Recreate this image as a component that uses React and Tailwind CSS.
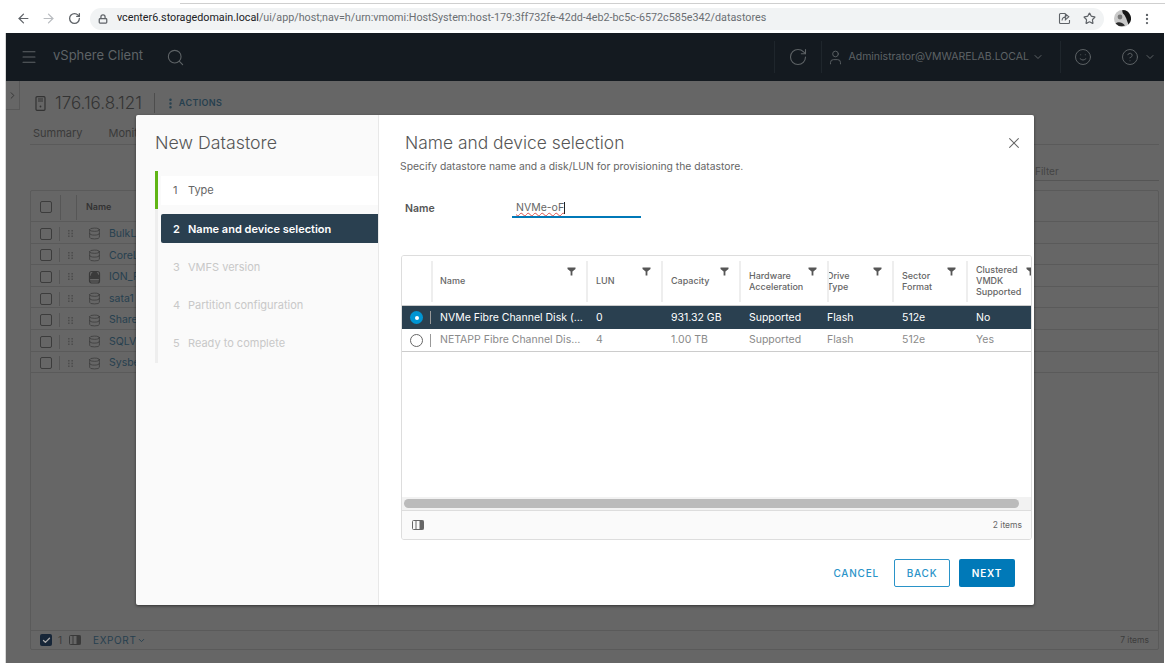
import React from 'react';
import {
  ArrowLeft,
  ArrowRight,
  RotateCw,
  Lock,
  Star,
  MoreVertical,
  Menu,
  Search,
  User,
  ChevronDown,
  ChevronRight,
  Smile,
  CircleHelp,
  Database,
  X,
  Check,
} from 'lucide-react';

const font = 'font-["Inter","Liberation_Sans",sans-serif]';

const CloudDatabase = ({ className }) => (
  <svg width="13" height="14" viewBox="0 0 13 14" fill="none" className={className}>
    <rect x="1.5" y="1.5" width="10" height="11.5" rx="2" stroke="currentColor" strokeWidth="1.2" />
    <path d="M1.5 8.5h10M1.5 11h10" stroke="currentColor" />
    <path d="M3 8c-1.6 0-1.8-2.2-.2-2.5C3 3.2 4.8 1.6 6.8 1.6c1.7 0 3 1.3 3.3 2.9 1.8.2 2.2 3.5.1 3.5z" fill="currentColor" />
  </svg>
);

const bgRows = [
  { name: 'BulkL', icon: Database },
  { name: 'CoreL', icon: Database },
  { name: 'ION_P', icon: CloudDatabase },
  { name: 'sata1', icon: Database },
  { name: 'Share', icon: Database },
  { name: 'SQLV', icon: Database },
  { name: 'Sysbe', icon: Database },
];

const steps = [
  { n: 1, label: 'Type', state: 'done' },
  { n: 2, label: 'Name and device selection', state: 'active' },
  { n: 3, label: 'VMFS version', state: 'todo' },
  { n: 4, label: 'Partition configuration', state: 'todo' },
  { n: 5, label: 'Ready to complete', state: 'todo' },
];

const cols = [
  { label: ['Name'], pad: 'pl-[9px]' },
  { label: ['LUN'], pad: 'pl-[10px]' },
  { label: ['Capacity'], pad: 'pl-[10px]' },
  { label: ['Hardware', 'Acceleration'], pad: 'pl-[10px]' },
  { label: ['Drive', 'Type'], pad: 'pl-0' },
  { label: ['Sector', 'Format'], pad: 'pl-[10px]' },
  { label: ['Clustered', 'VMDK', 'Supported'], pad: 'pl-[10px]', clipped: true },
];

const disks = [
  { name: 'NVMe Fibre Channel Disk (…', cells: ['0', '931.32 GB', 'Supported', 'Flash', '512e', 'No'], selected: true },
  { name: 'NETAPP Fibre Channel Dis…', cells: ['4', '1.00 TB', 'Supported', 'Flash', '512e', 'Yes'], selected: false },
];

const gridCols = 'grid grid-cols-[29px_155px_75px_78px_88px_65px_74px_65px]';

const FilterIcon = ({ clipped }) => (
  <svg width="9" height="9" viewBox="0 0 9 9" className={`absolute top-[11px] ${clipped ? '-right-[4px]' : 'right-[10px]'}`}>
    <path d="M0.5 0.5h8v1.4L5.4 4.6v4H3.6v-4L0.5 1.9z" fill="#565656" />
  </svg>
);

const ColumnsIcon = ({ color }) => (
  <svg width="12" height="10" viewBox="0 0 12 10">
    <rect x="0.5" y="0.5" width="11" height="9" rx="1" fill="none" stroke={color} />
    <path d="M4 0.5v9M8 0.5v9" stroke={color} />
    <rect x="8" y="0.5" width="3.5" height="9" fill={color} />
  </svg>
);

const Grip = () => (
  <svg width="5" height="7" viewBox="0 0 5 7">
    <path d="M0 0h1.6v1.6H0zM3.4 0H5v1.6H3.4zM0 2.7h1.6v1.6H0zM3.4 2.7H5v1.6H3.4zM0 5.4h1.6V7H0zM3.4 5.4H5V7H3.4z" fill="#4d4d4d" />
  </svg>
);

const ShareBox = () => (
  <svg width="13" height="13" viewBox="0 0 13 13" fill="none" stroke="#5f6368" strokeWidth="1.1" className="ml-auto">
    <path d="M7 1.5H2.5a1 1 0 0 0-1 1v8a1 1 0 0 0 1 1h8a1 1 0 0 0 1-1V8" />
    <path d="M4 8.5c.3-2.5 2-3.7 4.5-3.7M7.4 1.9l3.4 2.9-3.4 2.9z" />
  </svg>
);

const Avatar = () => (
  <svg width="17" height="17" viewBox="0 0 17 17" className="ml-[10px]">
    <circle cx="8.5" cy="8.5" r="8.5" fill="#c9c9c9" />
    <path d="M8.5 0a8.5 8.5 0 0 1 6 14.5C13 11 12 6 9 3.5 8.500 2.500 8 1 8.500 0z" fill="#161616" />
    <path d="M1.500 13.500C4 11.500 8 12 11 15.500A8.500 8.500 0 0 1 1.500 13.500z" fill="#2a2a2a" />
    <circle cx="6" cy="7" r="2.400" fill="#777" />
  </svg>
);

const HostIcon = () => (
  <svg width="11" height="15" viewBox="0 0 11 15" fill="none" stroke="#333" strokeWidth="1.2">
    <rect x="1" y="0.7" width="9" height="13.6" rx="1" />
    <path d="M3 3h5M3 5h5" />
    <circle cx="5.500" cy="10.500" r="0.900" fill="#333" stroke="none" />
  </svg>
);

function Toolbar() {
  return (
    <div className="h-[33px] bg-white shrink-0">
      <div className="h-[4px] ml-[180px] mr-[5px] border-b border-[#cfcfcf]" />
      <div className="h-[29px] flex items-center pl-[16px] pr-[16px]">
        <ArrowLeft size={15} className="text-[#5f6368]" />
        <ArrowRight size={15} className="text-[#b9bcc0] ml-[10px]" />
        <RotateCw size={13} className="text-[#5f6368] ml-[12px]" strokeWidth={2.4} />
        <div className="ml-[9px] w-[1015px] h-[22px] bg-[#f1f3f4] rounded-full flex items-center pl-[8px] pr-[7px]">
          <Lock size={10} className="text-[#5f6368]" strokeWidth={3} />
          <span className="ml-[9px] text-[10.75px] font-['Roboto',sans-serif] text-[#6b6f73] whitespace-nowrap">
            <span className="text-[#202124]">vcenter6.storagedomain.local</span>
            /ui/app/host;nav=h/urn:vmomi:HostSystem:host-179:3ff732fe-42dd-4eb2-bc5c-6572c585e342/datastores
          </span>
          <ShareBox />
          <Star size={13} className="ml-[12px] mr-[1px] text-[#5f6368]" strokeWidth={2.2} />
        </div>
        <Avatar />
        <MoreVertical size={14} className="ml-[9px] text-[#5f6368]" />
      </div>
    </div>
  );
}

function AppHeader() {
  return (
    <div className="h-[48px] shrink-0 bg-[#141a20] flex items-center pl-[14px] pr-[8px] text-[#5e6366]">
      <Menu size={18} strokeWidth={1.4} />
      <span className={`ml-[15px] -mt-[2px] text-[13px] ${font}`}>vSphere Client</span>
      <Search size={19} strokeWidth={1.4} className="ml-[23px]" />
      <div className="ml-auto flex items-center h-full">
        <div className="w-px h-[32px] bg-[#1f262c]" />
        <RotateCw size={20} strokeWidth={1.3} className="mx-[13px]" />
        <div className="w-px h-[32px] bg-[#1f262c]" />
        <User size={17} strokeWidth={1.3} className="ml-[5px]" />
        <span className={`ml-[4px] text-[10.5px] ${font}`}>Administrator@VMWARELAB.LOCAL</span>
        <ChevronDown size={12} className="ml-[3px]" />
        <div className="w-px h-[32px] bg-[#1f262c] ml-[16px]" />
        <Smile size={18} strokeWidth={1.3} className="ml-[13px]" />
        <CircleHelp size={18} strokeWidth={1.3} className="ml-[29px]" />
        <ChevronDown size={12} className="ml-[5px]" />
      </div>
    </div>
  );
}

function BackgroundPage() {
  return (
    <div className={`flex-1 bg-[#666666] flex min-h-0 ${font}`}>
      <div className="w-[14px] h-[29px] border-r border-b border-[#585858] flex items-center justify-center shrink-0">
        <ChevronRight size={11} className="text-[#333]" />
      </div>
      <div className="flex-1 flex flex-col pl-[10px] pr-[5px] pb-[13px] min-w-0">
        <div className="h-[24px] mt-[10px] flex items-center pl-[5px] text-[#333]">
          <HostIcon />
          <span className="ml-[9px] text-[17px] leading-none font-light">176.16.8.121</span>
          <div className="w-px h-[20px] bg-[#4d4d4d] ml-[12px]" />
          <MoreVertical size={13} className="ml-[9px] text-[#26404f]" strokeWidth={2.6} />
          <span className="ml-[2px] text-[9px] font-semibold tracking-[0.04em] text-[#26404f]">ACTIONS</span>
        </div>
        <div className="h-[20px] mt-[10px] border-b border-[#5a5a5a] flex items-start pl-[3px] text-[11px] text-[#3a3a3a]">
          <span>Summary</span>
          <span className="ml-[26px]">Monit</span>
        </div>
        <div className="h-[45px] flex justify-end items-end pb-[9px]">
          <div className="w-[124px] h-[17px] border-b border-[#555] text-[10px] text-[#444]">Filter</div>
        </div>
        <div className="flex-1 border border-[#5a5a5a] flex flex-col rounded-[2px]">
          <div className="h-[31px] flex items-center border-b border-[#5a5a5a] pl-[9px] pt-[2px] text-[9px] font-semibold text-[#333]">
            <div className="w-[12px] h-[12px] border border-[#3c3c3c] rounded-[2px]" />
            <div className="w-px h-[25px] bg-[#565656] ml-[8px]" />
            <div className="w-px h-[25px] bg-[#565656] ml-[15px]" />
            <span className="ml-[9px]">Name</span>
          </div>
          {bgRows.map((r) => {
            const Icon = r.icon;
            return (
              <div key={r.name} className="h-[21.6px] flex items-center border-b border-[#5a5a5a] pl-[9px] pt-[3px] text-[10.5px] text-[#26404f]">
                <div className="w-[12px] h-[12px] border border-[#3c3c3c] rounded-[2px]" />
                <div className="w-px h-[14px] bg-[#565656] ml-[7px]" />
                <div className="ml-[8px] flex"><Grip /></div>
                <Icon size={13} strokeWidth={1.4} className="ml-[15px] text-[#3a3a3a]" />
                <span className="ml-[8px]">{r.name}</span>
              </div>
            );
          })}
          <div className="mt-auto h-[19px] border-t border-[#5a5a5a] flex items-center pl-[9px] pr-[9px] text-[10px] text-[#3d3d3d]">
            <div className="w-[12px] h-[12px] bg-[#172638] rounded-[2px] flex items-center justify-center">
              <Check size={9} strokeWidth={3.5} className="text-[#aaa]" />
            </div>
            <span className="ml-[6px]">1</span>
            <div className="ml-[7px]"><ColumnsIcon color="#3a3a3a" /></div>
            <span className="ml-[12px] tracking-[0.06em] text-[#26404f]">EXPORT</span>
            <ChevronDown size={9} strokeWidth={2.5} className="ml-[1px] text-[#26404f]" />
            <span className="ml-auto text-[8.5px]">7 items</span>
          </div>
        </div>
      </div>
    </div>
  );
}

function WizardNav() {
  return (
    <div className="w-[243px] shrink-0 bg-[#fafafa] border-r border-[#e8e8e8] pl-[19px]">
      <h2 className="mt-[16px] h-[24px] leading-[24px] text-[17.8px] text-[#565656] font-light">New Datastore</h2>
      <div className="relative mt-[16px] w-full border-l-[3px] border-[#eeeeee] h-[192px] pt-[5px]">
        <div className="absolute -left-[3px] top-0 w-[3px] h-[38px] bg-[#60b515]" />
        {steps.map((s) => (
          <div
            key={s.n}
            className={`h-[29px] mb-[9.25px] ml-[3px] flex items-center pl-[12px] text-[11px] ${
              s.state === 'active'
                ? 'bg-[#2a4050] text-white font-semibold rounded-l-[2px]'
                : s.state === 'done'
                ? 'bg-white text-[#666]'
                : 'text-[#c8c8c8]'
            }`}
          >
            <span className="w-[15px]">{s.n}</span>
            <span>{s.label}</span>
          </div>
        ))}
      </div>
    </div>
  );
}

function DeviceTable() {
  return (
    <div className="mt-[37px] ml-[22px] w-[631px] h-[285px] border border-[#dddddd] rounded-[3px] flex flex-col overflow-hidden">
      <div className={`${gridCols} h-[50px] bg-white border-b border-[#cccccc] shrink-0`}>
        <div />
        {cols.map((c) => (
          <div key={c.label[0]} className="relative h-[49px] overflow-hidden">
            <div className="absolute left-0 top-[5px] h-[41px] w-[2px] bg-[#eeeeee]" />
            <div className={`h-full flex flex-col justify-center ${c.pad} text-[9px] leading-[11px] font-medium text-[#666]`}>
              {c.label.map((l) => (
                <span key={l}>{l}</span>
              ))}
            </div>
            <FilterIcon clipped={c.clipped} />
          </div>
        ))}
      </div>
      {disks.map((d) => (
        <div
          key={d.name}
          className={`${gridCols} h-[23px] items-center shrink-0 text-[10.5px] ${
            d.selected ? 'bg-[#2a4050] text-white' : 'bg-white text-[#8a8a8a] border-b border-[#cccccc]'
          }`}
        >
          <div className="flex items-center justify-between pl-[8px] h-full">
            {d.selected ? (
              <div className="w-[13px] h-[13px] rounded-full bg-[#0095d3] flex items-center justify-center">
                <div className="w-[4px] h-[4px] rounded-full bg-white" />
              </div>
            ) : (
              <div className="w-[13px] h-[13px] rounded-full border border-[#666] bg-white" />
            )}
            <div className="w-px h-[13px] bg-[#999]" />
          </div>
          <span className="pl-[9px] whitespace-nowrap">{d.name}</span>
          {d.cells.map((c, i) => (
            <span key={i} className={i === 3 ? '' : 'pl-[10px]'}>{c}</span>
          ))}
        </div>
      ))}
      <div className="flex-1 bg-white" />
      <div className="h-[14px] bg-[#f2f2f2] border-b border-[#dddddd] px-[2px] py-[2px] shrink-0">
        <div className="w-[615px] h-[9px] rounded-full bg-[#bbbbbb]" />
      </div>
      <div className="h-[28px] bg-[#fafafa] flex items-center justify-between pl-[10px] pr-[9px] shrink-0">
        <ColumnsIcon color="#666" />
        <span className="text-[8.5px] text-[#666]">2 items</span>
      </div>
    </div>
  );
}

function WizardContent() {
  return (
    <div className="flex-1 bg-white relative flex flex-col min-w-0">
      <h3 className="mt-[16px] ml-[26px] h-[24px] leading-[24px] text-[17.4px] text-[#565656] font-light">
        Name and device selection
      </h3>
      <p className="mt-[4px] ml-[21px] text-[10.35px] leading-[14px] text-[#666]">
        Specify datastore name and a disk/LUN for provisioning the datastore.
      </p>
      <button className="absolute top-[21px] right-[13px] text-[#666]">
        <X size={14} strokeWidth={1.4} className="scale-125" />
      </button>
      <div className="mt-[25px] ml-[26px] flex items-center h-[20px] pt-[1px]">
        <span className="w-[107px] text-[10.5px] font-semibold text-[#565656]">Name</span>
        <div className="w-[129px] h-[19px] border-b-2 border-[#0079b8] pl-[4px] text-[10.5px] text-[#666] flex items-center">
          <span className="underline decoration-wavy decoration-[#d9534f] decoration-[0.5px]">NVMe-oF</span>
          <span className="w-px h-[12px] bg-[#222]" />
        </div>
      </div>
      <DeviceTable />
      <div className="mt-[19px] pr-[19px] flex items-center justify-end text-[10px] font-medium tracking-[0.08em]">
        <span className="text-[#2a93c8] mr-[15px]">CANCEL</span>
        <button className="w-[56px] h-[28px] border border-[#2a93c8] rounded-[2px] text-[#2a93c8] tracking-[0.08em]">BACK</button>
        <button className="ml-[9px] w-[56px] h-[28px] bg-[#0079b8] rounded-[2px] text-white font-semibold tracking-[0.08em]">NEXT</button>
      </div>
    </div>
  );
}

export default function App() {
  return (
    <div className="relative w-[1170px] h-[663px] bg-white overflow-hidden flex flex-col">
      <Toolbar />
      <div className="flex-1 flex flex-col ml-[5px] mr-[6px] border-l border-[#d8d8d8] min-h-0">
        <AppHeader />
        <BackgroundPage />
      </div>
      <div className={`absolute left-[136px] top-[115px] w-[898px] h-[490px] flex rounded-[2px] shadow-[0_1px_3px_rgba(0,0,0,0.5)] overflow-hidden ${font}`}>
        <WizardNav />
        <WizardContent />
      </div>
    </div>
  );
}
